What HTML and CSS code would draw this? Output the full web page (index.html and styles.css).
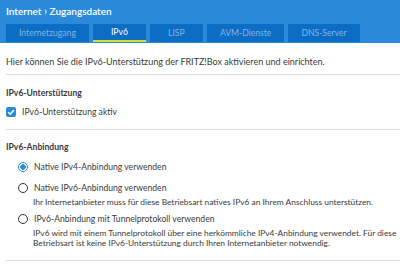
FILE: index.html
```html
<!DOCTYPE html>
<html lang="de">
<head>
    <meta charset="UTF-8">
    <title>Internet - Zugangsdaten</title>
    <link rel="stylesheet" href="styles.css">
</head>
<body>

    <header class="main-header">
        <div class="crumbs">Internet <span class="sep">&#8250;</span> Zugangsdaten</div>
        <nav class="tabs">
            <a href="#">Internetzugang</a>
            <a href="#" class="active">IPv6</a>
            <a href="#">LISP</a>
            <a href="#">AVM-Dienste</a>
            <a href="#">DNS-Server</a>
        </nav>
    </header>

    <div class="content">
        <p class="intro">Hier können Sie die IPv6-Unterstützung der FRITZ!Box aktivieren und einrichten.</p>

        <div class="section first">
            <h4>IPv6-Unterstützung</h4>
            <label class="check-row">
                <span class="checkbox">
                    <svg width="10" height="10" viewBox="0 0 10 10"><polyline points="2.2,5.2 4.2,7.2 7.9,2.9" fill="none" stroke="#fff" stroke-width="1.5"/></svg>
                </span>
                IPv6-Unterstützung aktiv
            </label>
        </div>

        <div class="section">
            <h4>IPv6-Anbindung</h4>
            <label class="option">
                <span class="radio checked"></span>
                Native IPv4-Anbindung verwenden
            </label>
            <label class="option">
                <span class="radio"></span>
                Native IPv6-Anbindung verwenden
            </label>
            <p class="desc">Ihr Internetanbieter muss für diese Betriebsart natives IPv6 an Ihrem Anschluss unterstützen.</p>
            <label class="option">
                <span class="radio"></span>
                IPv6-Anbindung mit Tunnelprotokoll verwenden
            </label>
            <p class="desc">IPv6 wird mit einem Tunnelprotokoll über eine herkömmliche IPv4-Anbindung verwendet. Für diese Betriebsart ist keine IPv6-Unterstützung durch Ihren Internetanbieter notwendig.</p>
        </div>
    </div>

</body>
</html>
```

FILE: styles.css
```css
body, html {
    margin: 0;
    padding: 0;
    font-family: Lato, "Open Sans", sans-serif;
    color: #3a3a3a;
    background-color: white;
}

.main-header {
    background-color: #2b8ad9;
    padding: 4px 0 0 6px;
    height: 39px;
}

.crumbs {
    color: white;
    font-size: 10px;
    font-weight: 600;
    line-height: 14px;
}

.crumbs .sep {
    font-weight: normal;
    font-size: 11px;
}

.tabs {
    display: flex;
    gap: 4px;
    margin-top: 6px;
}

.tabs a {
    display: block;
    box-sizing: border-box;
    min-width: 53px;
    height: 18px;
    padding: 0 13px;
    background-color: #0c6dc5;
    color: #82b4e6;
    font-size: 8.6px;
    line-height: 18px;
    text-align: center;
    text-decoration: none;
}

.tabs a.active {
    color: white;
    border-bottom: 2px solid #d2df2e;
    line-height: 17px;
}

.content {
    padding: 0 0 0 6px;
    font-size: 8.6px;
}

.intro {
    margin: 0;
    padding: 12px 0 5px;
    font-size: 9px;
    line-height: 14px;
    border-bottom: 1px solid #dedede;
}

.section {
    padding: 10px 0 11px;
    border-bottom: 1px solid #dedede;
}

.section.first {
    padding-top: 11px;
    padding-bottom: 10px;
}

.section h4 {
    margin: 0;
    font-size: 8.6px;
    line-height: 14px;
}

.check-row {
    display: flex;
    align-items: center;
    gap: 6px;
    margin-top: 5px;
    line-height: 14px;
}

.checkbox {
    display: inline-flex;
    width: 10px;
    height: 10px;
    border-radius: 2px;
    background-color: #2b8ad9;
}

.option {
    display: flex;
    align-items: center;
    gap: 6px;
    margin: 6px 0 0 12px;
    line-height: 14px;
}

.option + .option {
    margin-top: 7px;
}

.desc + .option {
    margin-top: 4px;
}

.radio {
    box-sizing: border-box;
    width: 10px;
    height: 10px;
    border: 1.5px solid #333;
    border-radius: 50%;
}

.radio.checked {
    border-color: #2b8ad9;
    background: radial-gradient(circle, #2b8ad9 0 2.5px, white 3px);
}

.desc {
    margin: 2px 0 0 27px;
    font-size: 8.4px;
    line-height: 10.5px;
}
```
